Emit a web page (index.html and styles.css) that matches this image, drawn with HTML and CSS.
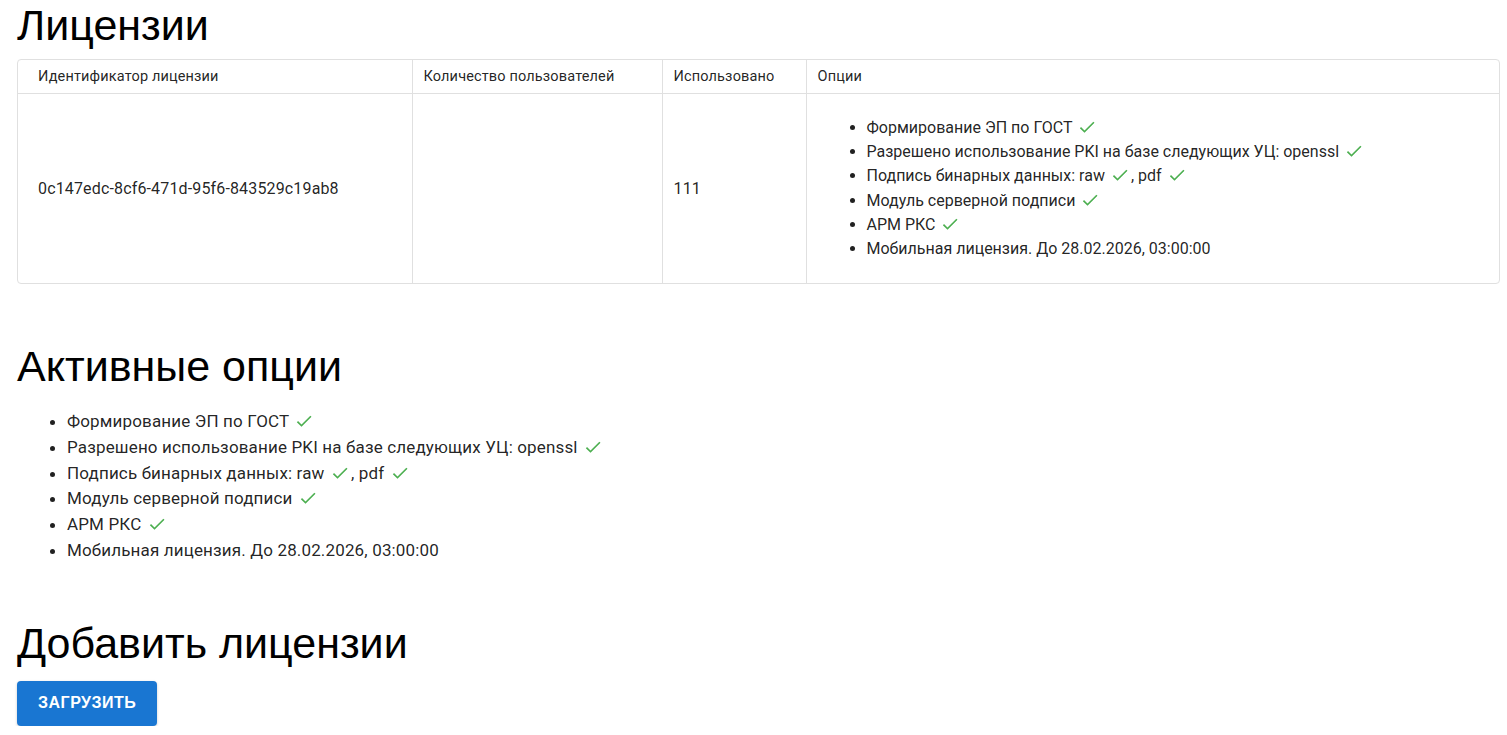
FILE: index.html
```html
<!DOCTYPE html>
<html lang="ru">
<head>
  <meta charset="UTF-8">
  <meta name="viewport" content="width=device-width, initial-scale=1.0">
  <title>Лицензии</title>
  <link rel="stylesheet" href="styles.css">
</head>
<body>
  <div class="page">
    <h1 class="title">Лицензии</h1>

    <div class="table-wrap">
      <table class="licenses">
        <colgroup>
          <col class="col-id">
          <col class="col-users">
          <col class="col-used">
          <col>
        </colgroup>
        <thead>
          <tr>
            <th>Идентификатор лицензии</th>
            <th>Количество пользователей</th>
            <th>Использовано</th>
            <th>Опции</th>
          </tr>
        </thead>
        <tbody>
          <tr>
            <td>0c147edc-8cf6-471d-95f6-843529c19ab8</td>
            <td></td>
            <td>111</td>
            <td>
              <ul class="options options-small">
                <li>Формирование ЭП по ГОСТ <svg class="check" viewBox="0 0 24 24"><path d="M9 16.17 4.83 12l-1.42 1.41L9 19 21 7l-1.41-1.41z"/></svg></li>
                <li>Разрешено использование PKI на базе следующих УЦ: openssl <svg class="check" viewBox="0 0 24 24"><path d="M9 16.17 4.83 12l-1.42 1.41L9 19 21 7l-1.41-1.41z"/></svg></li>
                <li>Подпись бинарных данных: raw <svg class="check" viewBox="0 0 24 24"><path d="M9 16.17 4.83 12l-1.42 1.41L9 19 21 7l-1.41-1.41z"/></svg>, pdf <svg class="check" viewBox="0 0 24 24"><path d="M9 16.17 4.83 12l-1.42 1.41L9 19 21 7l-1.41-1.41z"/></svg></li>
                <li>Модуль серверной подписи <svg class="check" viewBox="0 0 24 24"><path d="M9 16.17 4.83 12l-1.42 1.41L9 19 21 7l-1.41-1.41z"/></svg></li>
                <li>АРМ РКС <svg class="check" viewBox="0 0 24 24"><path d="M9 16.17 4.83 12l-1.42 1.41L9 19 21 7l-1.41-1.41z"/></svg></li>
                <li>Мобильная лицензия. До 28.02.2026, 03:00:00</li>
              </ul>
            </td>
          </tr>
        </tbody>
      </table>
    </div>

    <h1 class="title section">Активные опции</h1>
    <ul class="options">
      <li>Формирование ЭП по ГОСТ <svg class="check" viewBox="0 0 24 24"><path d="M9 16.17 4.83 12l-1.42 1.41L9 19 21 7l-1.41-1.41z"/></svg></li>
      <li>Разрешено использование PKI на базе следующих УЦ: openssl <svg class="check" viewBox="0 0 24 24"><path d="M9 16.17 4.83 12l-1.42 1.41L9 19 21 7l-1.41-1.41z"/></svg></li>
      <li>Подпись бинарных данных: raw <svg class="check" viewBox="0 0 24 24"><path d="M9 16.17 4.83 12l-1.42 1.41L9 19 21 7l-1.41-1.41z"/></svg>, pdf <svg class="check" viewBox="0 0 24 24"><path d="M9 16.17 4.83 12l-1.42 1.41L9 19 21 7l-1.41-1.41z"/></svg></li>
      <li>Модуль серверной подписи <svg class="check" viewBox="0 0 24 24"><path d="M9 16.17 4.83 12l-1.42 1.41L9 19 21 7l-1.41-1.41z"/></svg></li>
      <li>АРМ РКС <svg class="check" viewBox="0 0 24 24"><path d="M9 16.17 4.83 12l-1.42 1.41L9 19 21 7l-1.41-1.41z"/></svg></li>
      <li>Мобильная лицензия. До 28.02.2026, 03:00:00</li>
    </ul>

    <h1 class="title section add">Добавить лицензии</h1>
    <button class="upload">Загрузить</button>
  </div>
</body>
</html>
```

FILE: styles.css
```css
body {
  margin: 0;
  font-family: Roboto, "Liberation Sans", sans-serif;
  color: rgba(0, 0, 0, 0.87);
  background: #fff;
}

.page {
  padding: 0 7px 0 17px;
}

.title {
  font-family: "Liberation Sans", Arial, sans-serif;
  font-weight: 400;
  font-size: 43px;
  line-height: 50px;
  margin: 0;
  color: #000;
}

.title.section {
  margin-top: 57px;
}

.title.add {
  margin-top: 54px;
}

.table-wrap {
  margin-top: 9px;
  border: 1px solid #e0e0e0;
  border-radius: 4px;
  overflow: hidden;
}

.licenses {
  width: 100%;
  table-layout: fixed;
  border-collapse: collapse;
}

.col-id {
  width: 394px;
}

.col-users {
  width: 250px;
}

.col-used {
  width: 144px;
}

.licenses th,
.licenses td {
  text-align: left;
  padding: 0 11px;
  border-left: 1px solid #e0e0e0;
  vertical-align: middle;
}

.licenses th:first-child,
.licenses td:first-child {
  border-left: none;
  padding-left: 20px;
}

.licenses th {
  font-weight: 400;
  font-size: 14.5px;
  letter-spacing: 0.15px;
  height: 33px;
  border-bottom: 1px solid #e0e0e0;
}

.licenses td {
  height: 189px;
  font-size: 16px;
  letter-spacing: 0.15px;
}

.options {
  margin: 18px 0 0;
  padding-left: 50px;
  font-size: 17px;
  letter-spacing: 0.15px;
  line-height: 25.8px;
}

.options-small {
  margin: 0;
  padding-left: 49px;
  font-size: 16px;
  letter-spacing: 0;
  line-height: 24.2px;
}

.check {
  width: 20px;
  height: 20px;
  margin: 0 1px -4px 1px;
  fill: #4caf50;
}

.upload {
  margin-top: 13px;
  height: 45px;
  padding: 0 21px;
  border: none;
  border-radius: 4px;
  background: #1976d2;
  color: #fff;
  font-family: "Liberation Sans", Arial, sans-serif;
  font-size: 16px;
  font-weight: 600;
  letter-spacing: 0.5px;
  text-transform: uppercase;
  cursor: pointer;
  box-shadow: 0 1px 3px rgba(0, 0, 0, 0.2);
}
```
